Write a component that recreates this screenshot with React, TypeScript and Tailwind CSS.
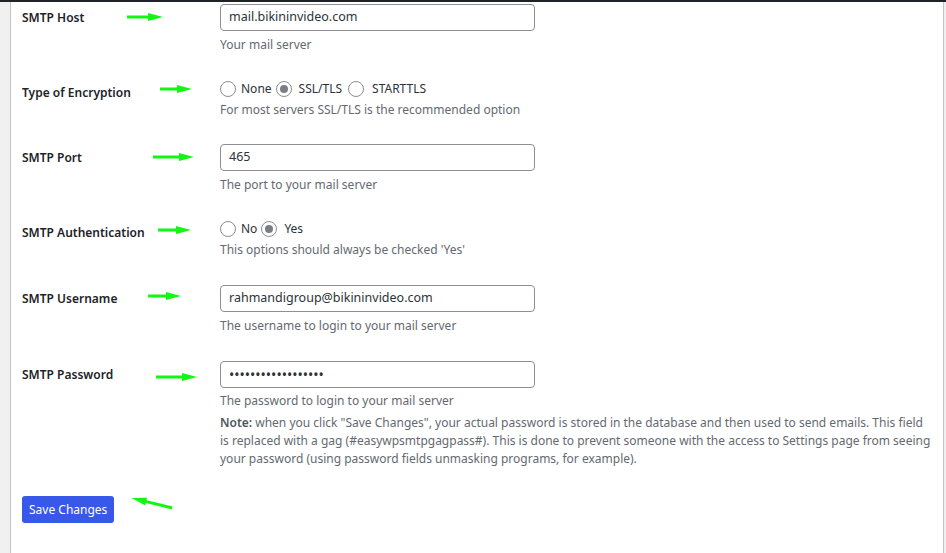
import React from "react";

const font = { fontFamily: '"Noto Sans", "Open Sans", sans-serif' };

function Arrow({ left, top, width, rotate = 0 }: { left: number; top: number; width: number; rotate?: number }) {
  return (
    <svg
      className="absolute pointer-events-none"
      style={{ left, top: top - 5, transform: `rotate(${rotate}deg)`, transformOrigin: "center" }}
      width={width}
      height={10}
      viewBox={`0 0 ${width} 10`}
    >
      <rect x={0} y={3.5} width={width - 10} height={3} fill="#14f514" />
      <polygon points={`${width - 15},1 ${width},5 ${width - 15},9`} fill="#14f514" />
    </svg>
  );
}

function Radio({ checked }: { checked?: boolean }) {
  return (
    <span className="inline-flex h-[16px] w-[16px] shrink-0 items-center justify-center rounded-full border border-[#8c8f94] bg-white">
      {checked ? <span className="h-[8px] w-[8px] rounded-full bg-[#7a7e84]" /> : null}
    </span>
  );
}

function Label({ children, pt }: { children: React.ReactNode; pt: string }) {
  return (
    <div className={`w-[198px] shrink-0 text-[12px] font-semibold leading-[18px] text-[#1d2327] ${pt}`}>{children}</div>
  );
}

function TextRow({ label, value, desc, className }: { label: string; value: string; desc: string; className?: string }) {
  return (
    <div className={`flex ${className ?? ""}`}>
      <Label pt="pt-[5px]">{label}</Label>
      <div>
        <div className="flex h-[27px] w-[315px] items-center rounded-[4px] border border-[#8c8f94] bg-white px-[8px] text-[12.5px] text-[#2c3338]">
          {value}
        </div>
        <p className="mt-[5px] text-[12px] leading-[18px] text-[#646970]">{desc}</p>
      </div>
    </div>
  );
}

export default function App() {
  return (
    <div className="relative flex h-[553px] w-[946px] flex-col overflow-hidden bg-[#f0f0f1]" style={font}>
      <div className="h-[2px] shrink-0 bg-[#1d2327]" />
      <div className="flex flex-1">
        <div className="w-[10px] shrink-0 bg-[#f0f0f1]" />
        <div className="min-w-0 flex-1 border-x border-[#c3c4c7] bg-white pl-[11px] pt-[2px]">
          <TextRow label="SMTP Host" value="mail.bikininvideo.com" desc="Your mail server" />

          <div className="mt-[26px] flex">
            <Label pt="pt-[4px]">Type of Encryption</Label>
            <div>
              <div className="flex h-[18px] items-center text-[12px] text-[#2c3338]">
                <Radio />
                <span className="ml-[5px] mr-[4px]">None</span>
                <Radio checked />
                <span className="ml-[7px] mr-[6px]">SSL/TLS</span>
                <Radio />
                <span className="ml-[8px]">STARTTLS</span>
              </div>
              <p className="mt-[3px] text-[12px] leading-[18px] text-[#646970]">
                For most servers SSL/TLS is the recommended option
              </p>
            </div>
          </div>

          <TextRow className="mt-[25px]" label="SMTP Port" value="465" desc="The port to your mail server" />

          <div className="mt-[26px] flex">
            <Label pt="pt-[4px]">SMTP Authentication</Label>
            <div>
              <div className="flex h-[18px] items-center text-[12px] text-[#2c3338]">
                <Radio />
                <span className="ml-[5px] mr-[4px]">No</span>
                <Radio checked />
                <span className="ml-[7px]">Yes</span>
              </div>
              <p className="mt-[3px] text-[12px] leading-[18px] text-[#646970]">
                This options should always be checked 'Yes'
              </p>
            </div>
          </div>

          <TextRow
            className="mt-[26px]"
            label="SMTP Username"
            value="rahmandigroup@bikininvideo.com"
            desc="The username to login to your mail server"
          />

          <div className="mt-[26px] flex">
            <Label pt="pt-[5px]">SMTP Password</Label>
            <div className="min-w-0">
              <div className="flex h-[27px] w-[315px] items-center rounded-[4px] border border-[#8c8f94] bg-white px-[8px] text-[14px] text-[#2c3338]">
                ••••••••••••••••••
              </div>
              <p className="mt-[4px] text-[12px] leading-[18px] text-[#646970]">The password to login to your mail server</p>
              <div className="mt-[4px] whitespace-nowrap text-[12px] leading-[18px] text-[#646970]">
                <div>
                  <b className="font-semibold text-[#50575e]">Note:</b> when you click "Save Changes", your actual password is stored in the database and then used to send emails. This field
                </div>
                <div>
                  is replaced with a gag (#easywpsmtpgagpass#). This is done to prevent someone with the access to Settings page from seeing
                </div>
                <div>your password (using password fields unmasking programs, for example).</div>
              </div>
            </div>
          </div>

          <button
            type="button"
            className="mt-[28px] h-[27px] rounded-[3px] bg-[#3858e9] px-[7px] text-[12px] text-white"
          >
            Save Changes
          </button>
        </div>
        <div className="w-[2px] shrink-0 bg-[#f0f0f1]" />
      </div>

      <Arrow left={127} top={17} width={36} />
      <Arrow left={160} top={89} width={32} />
      <Arrow left={153} top={157} width={41} />
      <Arrow left={158} top={230} width={33} />
      <Arrow left={148} top={296} width={33} />
      <Arrow left={156} top={377} width={41} />
      <Arrow left={131} top={503} width={42} rotate={194} />
    </div>
  );
}
